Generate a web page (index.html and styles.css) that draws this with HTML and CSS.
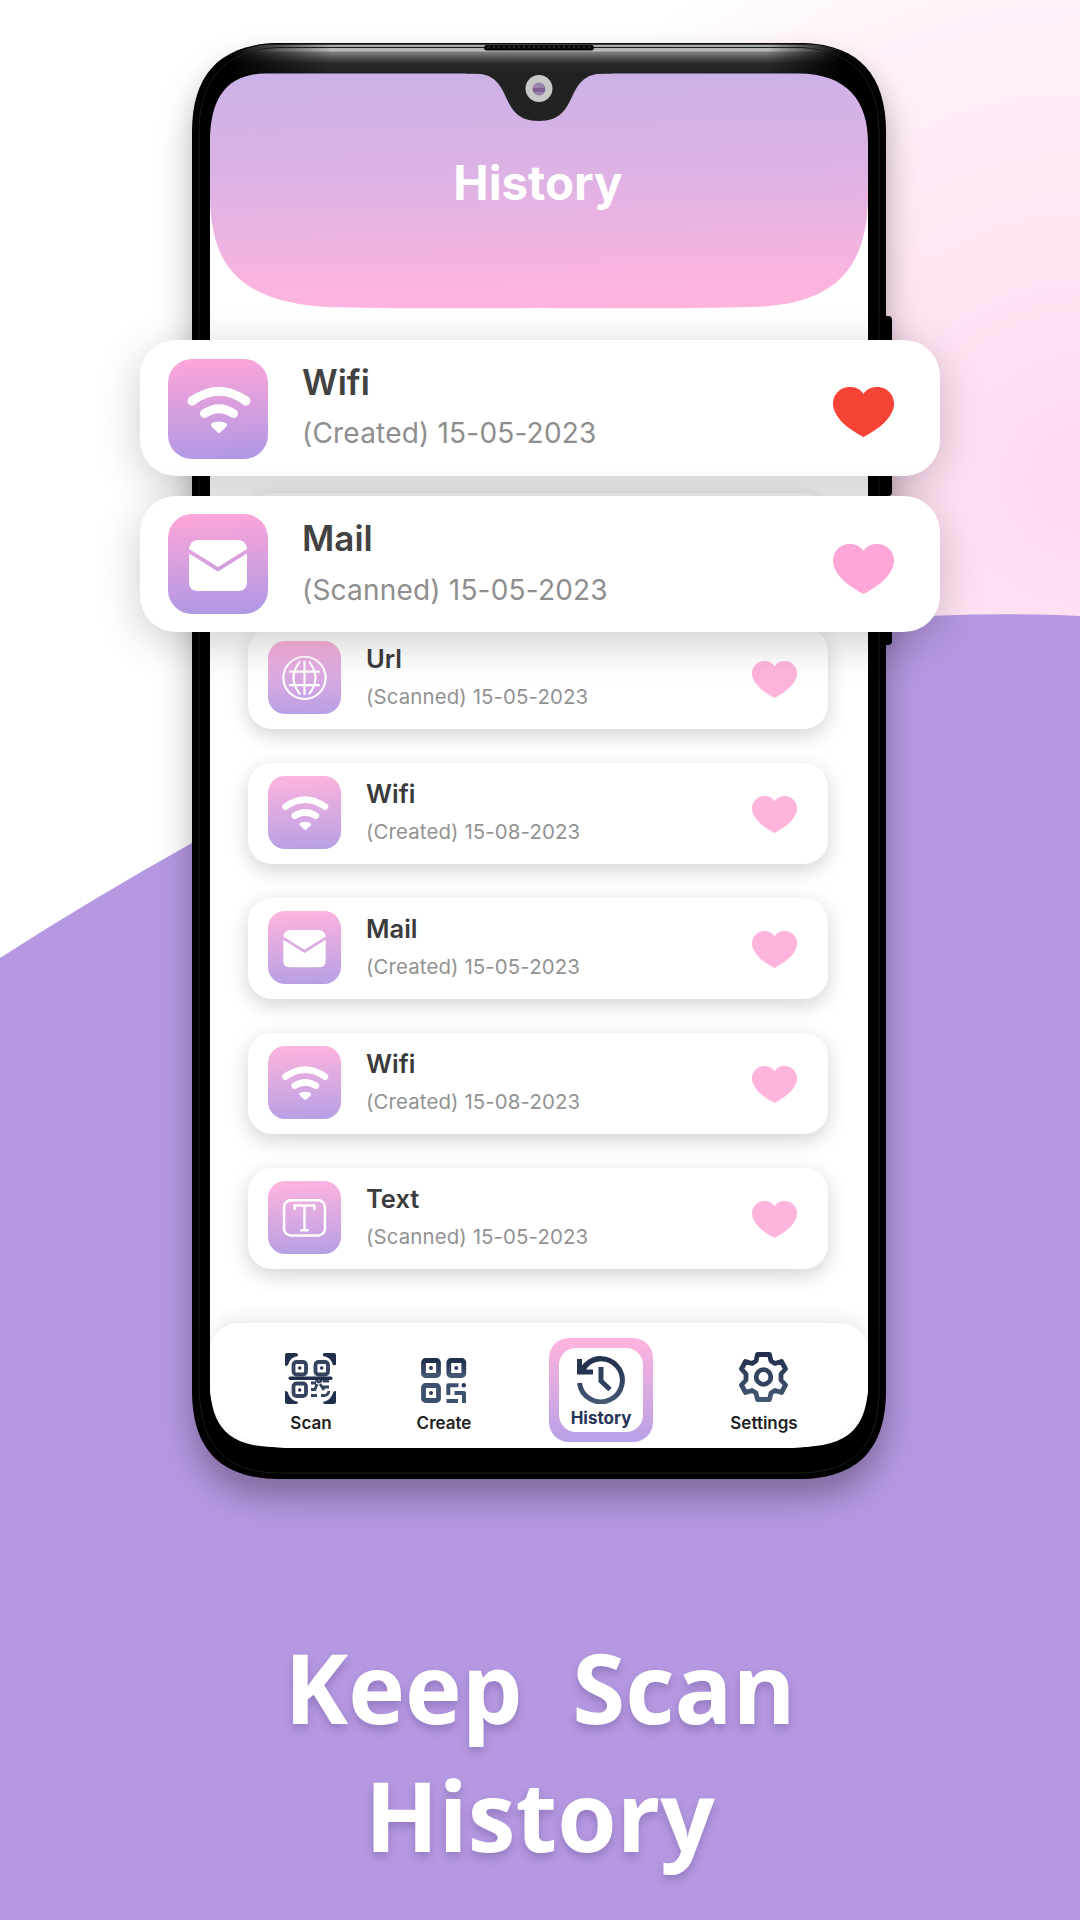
FILE: index.html
```html
<!DOCTYPE html>
<html lang="en">
<head>
<meta charset="utf-8">
<title>Keep Scan History</title>
<link rel="stylesheet" href="styles.css">
</head>
<body>
<svg class="defs" aria-hidden="true">
  <defs>
    <linearGradient id="navy" x1="0" y1="0" x2="0" y2="1"><stop offset="0" stop-color="#222f4c"/><stop offset="1" stop-color="#435672"/></linearGradient>
    <symbol id="wifi" viewBox="0 0 100 100">
      <g fill="none" stroke="#fff" stroke-width="9" stroke-linecap="round"><path d="M24 42Q51 22.500 78 42"/><path d="M36.500 54.500Q51 45 65.500 54.500"/></g>
      <path fill="#fff" d="M44 68C41.500 65 43.500 63 51 62.500C58.500 63 60.500 65 58 68L52.500 73.300Q51 74.500 49.500 73.300Z"/>
    </symbol>
    <symbol id="mail" viewBox="0 0 100 100">
      <path fill="#fff" d="M21 35Q22 26 31 26H69Q78 26 79 35L50 53Z"/>
      <path fill="#fff" d="M21 39.500L50 57.500L79 39.500V68Q79 77 70 77H30Q21 77 21 68Z"/>
    </symbol>
    <symbol id="globe" viewBox="0 0 100 100">
      <g fill="none" stroke="#fff" stroke-width="2.900"><circle cx="50" cy="50.500" r="29"/><path d="M50 27V74M29 42H71M29 60.500H71M44 28Q26 50.500 44 73M56 28Q74 50.500 56 73"/></g>
    </symbol>
    <symbol id="text" viewBox="0 0 100 100">
      <g fill="none" stroke="#fff" stroke-width="3.400"><rect x="22" y="26.500" width="56" height="48" rx="9"/><path d="M36.500 38.500V33.500H63.500V38.500M50 33.500V67M45.500 67.500H54.500" stroke-linecap="round"/></g>
    </symbol>
    <symbol id="heart" viewBox="0 0 61 50">
      <path fill="currentColor" d="M30.500 7C26-1 14-2 7 3C0 8 -2 17 2 25C7 36 19 44 30.500 50C42 44 54 36 59 25C63 17 61 8 54 3C47-2 35-1 30.500 7Z"/>
    </symbol>
  </defs>
</svg>

<main class="poster">
  <svg class="backdrop" viewBox="0 0 1080 1920" aria-hidden="true">
    <defs>
      <radialGradient id="blush" gradientUnits="userSpaceOnUse" cx="1080" cy="480" r="620"><stop offset="0" stop-color="#ffd9ee"/><stop offset=".25" stop-color="#ffe0f2"/><stop offset=".75" stop-color="#fff1f9"/><stop offset="1" stop-color="#fff"/></radialGradient>
    </defs>
    <rect width="1080" height="1920" fill="#fff"/>
    <rect width="1080" height="700" fill="url(#blush)"/>
    <path fill="#b598e1" d="M0 958Q90 900 192 843C460 695 730 600 1080 616V1920H0Z"/>
  </svg>

  <section class="phone">
    <svg class="shell" viewBox="0 0 702 1438" aria-hidden="true">
      <defs>
        <linearGradient id="rim" x1="0" y1="0" x2="0" y2="44" gradientUnits="userSpaceOnUse"><stop offset="0" stop-color="#111"/><stop offset=".05" stop-color="#222"/><stop offset=".08" stop-color="#aaa"/><stop offset=".2" stop-color="#bbb"/><stop offset=".23" stop-color="#808080"/><stop offset=".35" stop-color="#555"/><stop offset=".48" stop-color="#2c2c2c"/><stop offset=".7" stop-color="#222"/><stop offset="1" stop-color="#222"/></linearGradient>
        <linearGradient id="sides"><stop offset="0" stop-color="#000"/><stop offset=".05" stop-color="#000"/><stop offset=".2" stop-color="#000" stop-opacity="0"/><stop offset=".83" stop-color="#000" stop-opacity="0"/><stop offset=".94" stop-color="#000"/><stop offset="1" stop-color="#000"/></linearGradient>
        <linearGradient id="head" x1=".47" y1="0" x2=".53" y2="1"><stop offset="0" stop-color="#ccb2e8"/><stop offset=".45" stop-color="#deb2e4"/><stop offset=".8" stop-color="#f4b3df"/><stop offset="1" stop-color="#ffb4de"/></linearGradient>
      </defs>
      <rect x="688" y="274" width="12" height="180" rx="4"/><rect x="688" y="480" width="12" height="123" rx="4"/>
      <path d="M82 1H612C668 3 694 34 694 90V1348C694 1405 668 1437 606 1437H88C26 1437 0 1405 0 1348V90C0 34 26 4 82 1Z"/>
      <path fill="url(#rim)" d="M82 1.500H612C660 3 690 34 692 90H2C4 34 34 4 82 1.500Z"/>
      <path fill="url(#sides)" d="M82 1H612C660 3 690 34 692 90H2C4 34 34 3 82 1Z"/>
      <path fill="none" stroke="#1c1c1c" d="M84 5.500H610C660 9 687 36 687 90V1348C687 1405 660 1431 606 1431H88C34 1431 7 1405 7 1340V90C7 36 34 9 84 5.500"/>
      <path fill="#fff" d="M18 110H676V1340C676 1386 656 1405 606 1405H84C38 1405 18 1386 18 1340Z"/>
      <path fill="url(#head)" d="M74 31.500H606C656 31.500 676 60 676 100V158C674 220 650 263 560 265Q490 267 347 266Q204 267 134 265C44 259 20 220 18 158V100C18 57 34 31.500 74 31.500Z"/>
      <path fill="#222" d="M274 30V31.500H282C324 31.500 304 79 347 79C390 79 370 31.500 412 31.500H420V30Z"/>
      <rect x="292" y="3" width="110" height="5.500" rx="2.700" fill="#080808"/>
      <path stroke="#444" stroke-dasharray="2 3" d="M296 5H400"/>
      <circle cx="347" cy="46.500" r="13.500" fill="#c8c8c6"/><circle cx="347" cy="47" r="6.500" fill="#9a80ac"/><path fill="#7f6191" d="M341 46H353V50H341Z"/>
    </svg>

    <header class="app-head"><h1>History</h1></header>

    <ul class="list">
      <li class="card"></li>
      <li class="card"><span class="tile"><svg><use href="#globe"/></svg></span><div class="info"><h2>Url</h2><p>(Scanned) 15-05-2023</p></div><svg class="heart"><use href="#heart"/></svg></li>
      <li class="card"><span class="tile"><svg><use href="#wifi"/></svg></span><div class="info"><h2>Wifi</h2><p>(Created) 15-08-2023</p></div><svg class="heart"><use href="#heart"/></svg></li>
      <li class="card"><span class="tile"><svg><use href="#mail"/></svg></span><div class="info"><h2>Mail</h2><p>(Created) 15-05-2023</p></div><svg class="heart"><use href="#heart"/></svg></li>
      <li class="card"><span class="tile"><svg><use href="#wifi"/></svg></span><div class="info"><h2>Wifi</h2><p>(Created) 15-08-2023</p></div><svg class="heart"><use href="#heart"/></svg></li>
      <li class="card"><span class="tile"><svg><use href="#text"/></svg></span><div class="info"><h2>Text</h2><p>(Scanned) 15-05-2023</p></div><svg class="heart"><use href="#heart"/></svg></li>
    </ul>

    <nav class="tabs">
      <a class="tab scan">
        <svg width="51" height="51" viewBox="0 0 51 51">
          <g fill="none" stroke="#34445f" stroke-width="3.800"><rect x="8.500" y="9" width="12.500" height="12.500" rx="3"/><rect x="30.500" y="9" width="12.500" height="12.500" rx="3"/><rect x="8.500" y="30.500" width="12.500" height="12.500" rx="3"/></g>
          <g fill="none" stroke="#34445f" stroke-width="2.800"><path d="M26 36.500H30L32 31M31 27Q34 31 37 27M35 31L39 37M38 28H44M38 34H44M26 42.500H32M36 42.500H39Q43 42.500 44 38M26 30H31"/></g>
          <g fill="#222f4c"><path d="M0 13V2Q0 0 2 0H11Q13 0 13 3Q5 4 3 12Q1 13 0 13ZM38 1Q38 0 40 0H49Q51 0 51 2V11Q51 13 48 12Q46 4 38 3ZM0 38Q3 38 3 40Q5 47 13 49Q13 51 11 51H2Q0 51 0 49ZM51 38V49Q51 51 49 51H40Q38 51 38 49Q46 47 48 40Q48 38 51 38Z"/><rect x="3.500" y="23.500" width="44" height="3.400" rx="1.700"/>
          <circle cx="14.700" cy="15" r="1.700"/><circle cx="36.700" cy="15" r="1.700"/><circle cx="14.700" cy="37" r="1.700"/></g>
        </svg>
        <span>Scan</span>
      </a>
      <a class="tab create">
        <svg width="46" height="46" viewBox="0 0 46 46">
          <g fill="none" stroke="url(#navy)" stroke-width="4.800"><rect x="2.500" y="2.500" width="15" height="15" rx="2"/><rect x="27.800" y="2.500" width="15" height="15" rx="2"/></g>
          <rect x="2.500" y="27.500" width="15" height="15" rx="2" fill="none" stroke="#3d506d" stroke-width="4.800"/>
          <g fill="none" stroke="#3d506d" stroke-width="4" stroke-linejoin="round"><path d="M37.500 27.300H27.300V37M33.500 35H43V45M25.500 43H37"/></g>
          <g fill="#2b3a57"><circle cx="10" cy="10" r="2"/><circle cx="35.300" cy="10" r="2"/><circle cx="10" cy="35" r="2"/><circle cx="42.800" cy="27.300" r="2.200"/></g>
        </svg>
        <span>Create</span>
      </a>
      <a class="tab history">
        <div class="active">
          <svg width="48" height="48" viewBox="0 0 48 48">
            <path fill="none" stroke="url(#navy)" stroke-width="5" d="M2.500 27A21.500 21.500 0 1 0 5 14"/><path fill="none" stroke="#25334f" stroke-width="5" d="M5 15Q12 2.500 24 2.500M2.500 3V16H16"/><path fill="none" stroke="#30415d" stroke-width="5" d="M24 11V25L33 33.500"/>
          </svg>
          <span>History</span>
        </div>
      </a>
      <a class="tab settings">
        <svg width="49" height="50" viewBox="0 0 49 50">
          <path fill="none" stroke="url(#navy)" stroke-width="4.800" stroke-linejoin="round" d="M18.500 2.500H30.500L32 9L36 11.500L42.500 9.500L46.500 17L42 22V28L46.500 33L42.500 40.500L36 38.500L32 41L30.500 47.500H18.500L17 41L13 38.500L6.500 40.500L2.500 33L7 28V22L2.500 17L6.500 9.500L13 11.500L17 9Z"/><circle cx="24.500" cy="25" r="7.300" fill="none" stroke="#33435f" stroke-width="4.800"/>
        </svg>
        <span>Settings</span>
      </a>
    </nav>
  </section>

  <section class="spotlight">
    <article class="card big"><span class="tile"><svg><use href="#wifi"/></svg></span><div class="info"><h2>Wifi</h2><p>(Created) 15-05-2023</p></div><svg class="heart liked"><use href="#heart"/></svg></article>
    <article class="card big"><span class="tile"><svg><use href="#mail"/></svg></span><div class="info"><h2>Mail</h2><p>(Scanned) 15-05-2023</p></div><svg class="heart"><use href="#heart"/></svg></article>
  </section>

  <h3 class="slogan">Keep&nbsp; Scan<br>History</h3>
</main>
</body>
</html>
```
FILE: styles.css
```css
* { box-sizing: border-box; margin: 0; padding: 0; }
body { width: 1080px; height: 1920px; overflow: hidden; font-family: Inter, "Liberation Sans", sans-serif; }
.defs { position: absolute; width: 0; height: 0; }
.poster { position: relative; width: 1080px; height: 1920px; padding-top: 42px; overflow: hidden; }
.backdrop { position: absolute; inset: 0; width: 1080px; height: 1920px; }

.phone { position: relative; width: 694px; height: 1438px; margin-left: 192px; padding: 31px 18px 32px; display: flex; flex-direction: column; }
.shell { position: absolute; left: 0; top: 0; width: 702px; height: 1438px; filter: drop-shadow(0 18px 16px rgba(0, 0, 0, .3)); }
.app-head { position: relative; height: 235px; padding: 80px 2px 0 0; text-align: center; }
.app-head h1 { font-size: 47.400px; line-height: 60px; font-weight: 700; color: #fff; }

.list { position: relative; list-style: none; display: flex; flex-direction: column; gap: 34px; margin: 185px 40px 0 38px; }
.card { display: flex; align-items: flex-start; height: 101px; padding: 13px 31px 0 20px; border-radius: 24px; background: #fff; box-shadow: 0 6px 20px rgba(0, 0, 0, .18); }
.tile { flex: none; width: 73px; height: 73px; border-radius: 17px; background: linear-gradient(177deg, #ffb4de, #b69fe5); }
.tile svg { display: block; width: 100%; height: 100%; }
.info { flex: 1; padding: 2px 0 0 25px; }
.info h2 { font-size: 25.500px; line-height: 32px; font-weight: 600; color: #3b3b3d; }
.info p { margin-top: 9px; font-size: 20.400px; line-height: 26px; letter-spacing: .12px; color: #929292; white-space: nowrap; }
.heart { flex: none; width: 45px; height: 37px; margin-top: 20px; color: #ffb4de; }

.spotlight { position: absolute; left: 140px; top: 340px; width: 800px; display: flex; flex-direction: column; gap: 20px; }
.big { height: 136px; padding: 19px 46px 0 28px; border-radius: 36px; box-shadow: 0 10px 44px rgba(0, 0, 0, .2); }
.big .tile { width: 100px; height: 100px; border-radius: 24px; background: linear-gradient(177deg, #ffa6d9, #ae97e4); }
.big .info { padding: 1px 0 0 34px; }
.big h2 { font-size: 35px; line-height: 44px; color: #424242; }
.big p { margin-top: 11px; font-size: 28px; line-height: 36px; letter-spacing: .2px; color: #8e8e8e; }
.big .heart { width: 61px; height: 50px; margin-top: 28px; color: #ffa6d9; }
.big .liked { color: #f64336; }
.big + .big { padding-top: 18px; }
.big + .big .info { padding-top: 2px; }
.big + .big p { margin-top: 12px; }
.big + .big .heart { margin-top: 30px; }

.tabs { position: relative; height: 125px; margin-top: auto; display: flex; align-items: flex-start; border-radius: 28px 28px 75px 75px / 28px 28px 60px 60px; background: #fff; box-shadow: 0 -6px 18px rgba(0, 0, 0, .08); }
.tab { display: flex; flex-direction: column; align-items: center; font-size: 17px; line-height: 22px; font-weight: 600; color: #222; }
.tab svg { display: block; }
.scan { width: 60px; margin-left: 71px; padding-top: 30px; gap: 8px; }
.scan svg { margin-right: 2px; }
.create { width: 70px; margin-left: 68px; padding-top: 35px; gap: 8px; }
.history { width: 104px; height: 104px; margin: 15px 0 0 70px; padding: 10px; border-radius: 20px; background: linear-gradient(#ffb4de, #b8a0e6); color: #26345a; font-weight: 700; }
.active { display: flex; flex-direction: column; align-items: center; gap: 3px; width: 84px; height: 84px; padding-top: 8px; border-radius: 17px; background: #fff; }
.settings { width: 80px; margin-left: 71px; padding-top: 29px; gap: 10px; }
.settings svg { margin-right: 2px; }

.slogan { position: relative; margin-top: 143px; text-align: center; font: 700 96px/128px "Open Sans", sans-serif; color: #fff; text-shadow: 0 5px 9px rgba(70, 45, 110, .28); }
```
